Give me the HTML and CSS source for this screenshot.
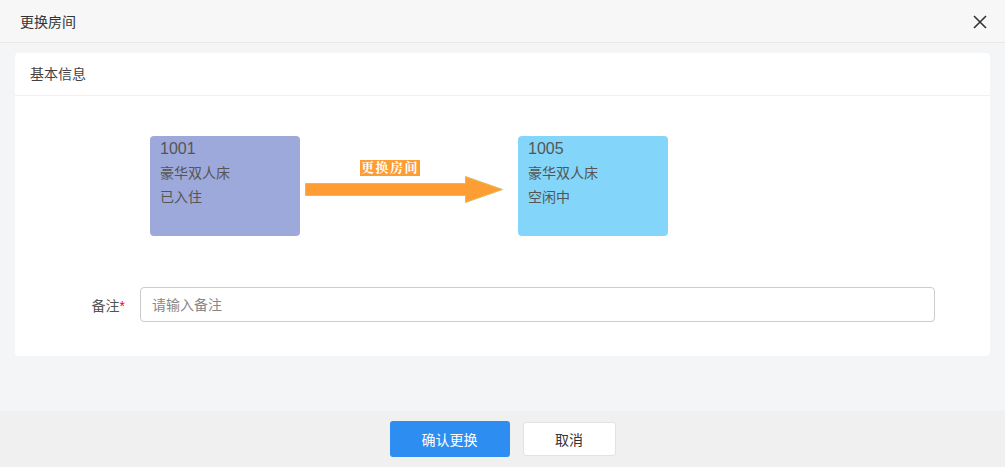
FILE: index.html
```html
<!DOCTYPE html>
<html lang="zh">
<head>
    <meta charset="UTF-8">
    <title>更换房间</title>
    <link rel="stylesheet" href="styles.css">
</head>
<body>
    <div class="dialog">
        <div class="dialog-header">
            <span class="dialog-title">更换房间</span>
            <span class="dialog-close">
                <svg width="14" height="14" viewBox="0 0 14 14"><path d="M1 1L13 13M13 1L1 13" stroke="#333" stroke-width="1.6" fill="none"/></svg>
            </span>
        </div>
        <div class="dialog-body">
            <div class="card">
                <div class="card-header">基本信息</div>
                <div class="card-content">
                    <div class="rooms">
                        <div class="room room-busy">
                            <div class="room-no">1001</div>
                            <div>豪华双人床</div>
                            <div>已入住</div>
                        </div>
                        <div class="arrow">
                            <span class="arrow-label">更换房间</span>
                            <svg width="200" height="30" viewBox="0 0 200 30">
                                <path d="M0.5 8.5H160.5V1.5L197.5 14.5L160.5 27.5V20.5H0.5Z" fill="#fe9d33" stroke="#dcbc5a" stroke-width="1"/>
                            </svg>
                        </div>
                        <div class="room room-free">
                            <div class="room-no">1005</div>
                            <div>豪华双人床</div>
                            <div>空闲中</div>
                        </div>
                    </div>
                    <div class="form-row">
                        <label class="form-label">备注<span class="required">*</span></label>
                        <input type="text" class="form-input" placeholder="请输入备注">
                    </div>
                </div>
            </div>
        </div>
        <div class="dialog-footer">
            <button class="btn btn-primary">确认更换</button>
            <button class="btn btn-default">取消</button>
        </div>
    </div>
</body>
</html>
```

FILE: styles.css
```css
/* Page */
body {
    margin: 0;
    font-family: "Liberation Sans", "Noto Sans CJK SC", sans-serif;
    font-size: 14px;
    color: #333;
}

.dialog {
    width: 1005px;
    height: 467px;
    display: flex;
    flex-direction: column;
}

/* Header */
.dialog-header {
    height: 42px;
    background: #f7f7f7;
    border-bottom: 1px solid #e8e8e8;
    display: flex;
    align-items: center;
    justify-content: space-between;
    padding: 0 18px 0 20px;
}

.dialog-title {
    font-size: 14px;
    color: #333;
}

.dialog-close {
    display: flex;
    margin-top: 2px;
}

/* Body */
.dialog-body {
    flex: 1;
    background: #f4f5f7;
    padding: 10px 15px;
}

.card {
    background: #fff;
    border-radius: 4px;
    height: 303px;
}

.card-header {
    height: 42px;
    line-height: 42px;
    padding-left: 15px;
    border-bottom: 1px solid #eef0f2;
    color: #444;
}

.card-content {
    padding-top: 40px;
}

.rooms {
    display: flex;
    padding-left: 135px;
}

.room {
    width: 150px;
    height: 100px;
    box-sizing: border-box;
    border-radius: 4px;
    padding: 3px 10px;
    color: #555;
    line-height: 24px;
}

.room-no {
    font-size: 16px;
    line-height: 20px;
    margin-bottom: 2px;
}

.room-busy {
    background: #9da9db;
}

.room-free {
    background: #83d6fa;
}

.arrow {
    width: 218px;
    display: flex;
    flex-direction: column;
    align-items: flex-start;
    padding-top: 24px;
    box-sizing: border-box;
}

.arrow-label {
    margin-left: 60px;
    background: #fe9d33;
    color: #fff;
    font-family: "Liberation Serif", "Noto Serif CJK SC", "Noto Sans CJK SC", serif;
    font-weight: bold;
    font-size: 13px;
    line-height: 16px;
    padding: 0 1px;
    letter-spacing: 1.5px;
}

.arrow svg {
    margin-left: 5px;
    margin-top: -1px;
}

/* Form */
.form-row {
    display: flex;
    align-items: center;
    margin-top: 51px;
}

.form-label {
    width: 125px;
    box-sizing: border-box;
    padding-right: 15px;
    text-align: right;
    color: #555;
}

.required {
    color: #f00;
}

.form-input {
    width: 795px;
    height: 35px;
    box-sizing: border-box;
    border: 1px solid #ccc;
    border-radius: 4px;
    padding: 0 11px;
    font-family: inherit;
    font-size: 14px;
    outline: none;
}

.form-input::placeholder {
    color: #888;
}

/* Footer */
.dialog-footer {
    height: 56px;
    background: #f0f0f0;
    display: flex;
    justify-content: center;
    align-items: center;
    gap: 13px;
}

.btn {
    font-family: inherit;
    font-size: 14px;
    border-radius: 3px;
    cursor: pointer;
}

.btn-primary {
    width: 120px;
    height: 36px;
    background: #2e8df0;
    color: #fff;
    border: none;
}

.btn-default {
    width: 93px;
    height: 34px;
    background: #fff;
    color: #333;
    border: 1px solid #e2e2e2;
}
```
